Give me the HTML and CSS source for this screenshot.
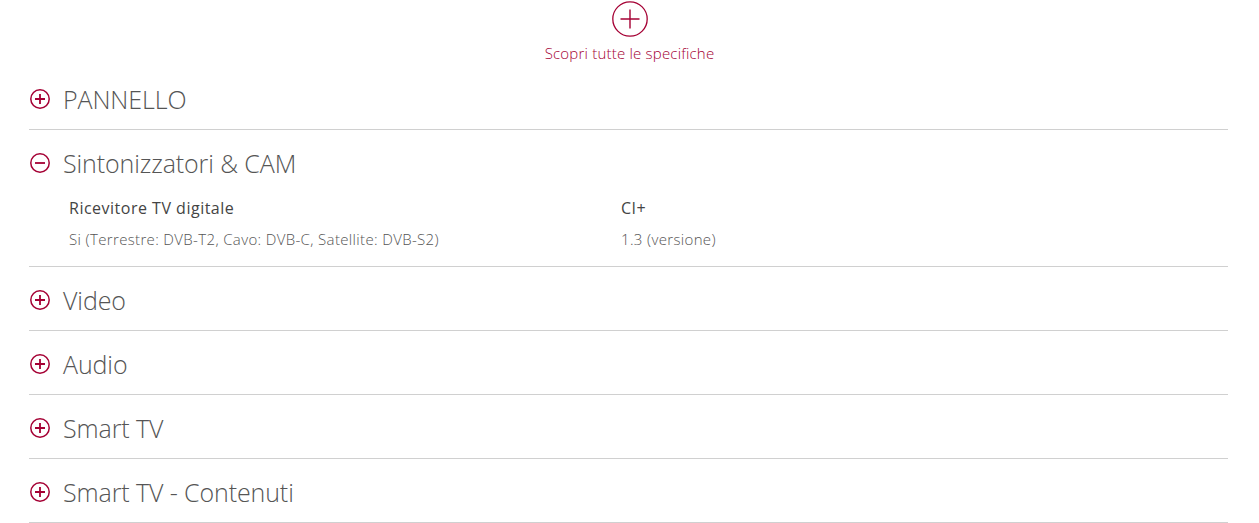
FILE: index.html
```html
<!DOCTYPE html>
<html lang="it">
<head>
  <meta charset="UTF-8">
  <meta name="viewport" content="width=device-width, initial-scale=1.0">
  <title>Specifiche</title>
  <link rel="stylesheet" href="styles.css">
</head>
<body>

  <div class="all-specs">
    <svg class="big-plus" width="36" height="36" viewBox="0 0 36 36">
      <circle cx="18" cy="18" r="17.2" fill="none" stroke="#a50034" stroke-width="1.3"/>
      <path d="M18 8.5v19M8.5 18h19" stroke="#a50034" stroke-width="1.4"/>
    </svg>
    <div class="all-specs-text">Scopri tutte le specifiche</div>
  </div>

  <div class="specs">
    <div class="spec">
      <div class="spec-head">
        <svg class="ico" width="20" height="20" viewBox="0 0 20 20"><circle cx="10" cy="10" r="9.2" fill="none" stroke="#a50034" stroke-width="1.5"/><path d="M10 5v10M5 10h10" stroke="#a50034" stroke-width="1.8"/></svg>
        <span>PANNELLO</span>
      </div>
    </div>

    <div class="spec open">
      <div class="spec-head">
        <svg class="ico" width="20" height="20" viewBox="0 0 20 20"><circle cx="10" cy="10" r="9.2" fill="none" stroke="#a50034" stroke-width="1.5"/><path d="M5 10h10" stroke="#a50034" stroke-width="1.8"/></svg>
        <span>Sintonizzatori &amp; CAM</span>
      </div>
      <div class="spec-body">
        <div class="item">
          <div class="item-name">Ricevitore TV digitale</div>
          <div class="item-value">Si (Terrestre: DVB-T2, Cavo: DVB-C, Satellite: DVB-S2)</div>
        </div>
        <div class="item">
          <div class="item-name">CI+</div>
          <div class="item-value">1.3 (versione)</div>
        </div>
      </div>
    </div>

    <div class="spec">
      <div class="spec-head">
        <svg class="ico" width="20" height="20" viewBox="0 0 20 20"><circle cx="10" cy="10" r="9.2" fill="none" stroke="#a50034" stroke-width="1.5"/><path d="M10 5v10M5 10h10" stroke="#a50034" stroke-width="1.8"/></svg>
        <span>Video</span>
      </div>
    </div>

    <div class="spec">
      <div class="spec-head">
        <svg class="ico" width="20" height="20" viewBox="0 0 20 20"><circle cx="10" cy="10" r="9.2" fill="none" stroke="#a50034" stroke-width="1.5"/><path d="M10 5v10M5 10h10" stroke="#a50034" stroke-width="1.8"/></svg>
        <span>Audio</span>
      </div>
    </div>

    <div class="spec">
      <div class="spec-head">
        <svg class="ico" width="20" height="20" viewBox="0 0 20 20"><circle cx="10" cy="10" r="9.2" fill="none" stroke="#a50034" stroke-width="1.5"/><path d="M10 5v10M5 10h10" stroke="#a50034" stroke-width="1.8"/></svg>
        <span>Smart TV</span>
      </div>
    </div>

    <div class="spec">
      <div class="spec-head">
        <svg class="ico" width="20" height="20" viewBox="0 0 20 20"><circle cx="10" cy="10" r="9.2" fill="none" stroke="#a50034" stroke-width="1.5"/><path d="M10 5v10M5 10h10" stroke="#a50034" stroke-width="1.8"/></svg>
        <span>Smart TV - Contenuti</span>
      </div>
    </div>
  </div>

</body>
</html>
```

FILE: styles.css
```css
body {
  margin: 0;
  font-family: "Open Sans", Arial, sans-serif;
  background: #fff;
  color: #333;
}
.all-specs {
  height: 66px;
  display: flex;
  flex-direction: column;
  align-items: center;
  padding-top: 1px;
  box-sizing: border-box;
}
.all-specs-text {
  margin-top: 6px;
  font-size: 15px;
  font-weight: 300;
  letter-spacing: 0.2px;
  color: #a50034;
  line-height: 20px;
}
.specs {
  padding: 0 31px 0 29px;
}
.spec {
  border-bottom: 1px solid #d0d0d0;
}
.spec-head {
  height: 63px;
  box-sizing: border-box;
  padding: 2px 0 0 1px;
  display: flex;
  align-items: center;
  gap: 13px;
  font-size: 25px;
  font-weight: 300;
  letter-spacing: -0.1px;
  color: #555;
}
.ico {
  flex: none;
}
.spec-body {
  display: grid;
  grid-template-columns: 552px 1fr;
  padding: 4px 0 0 40px;
  height: 73px;
  box-sizing: border-box;
}
.item-name {
  font-size: 16px;
  color: #444;
  letter-spacing: 0.5px;
  line-height: 22px;
}
.item-value {
  margin-top: 10px;
  font-size: 15px;
  font-weight: 300;
  letter-spacing: 0.35px;
  color: #555;
  line-height: 20px;
}
```
